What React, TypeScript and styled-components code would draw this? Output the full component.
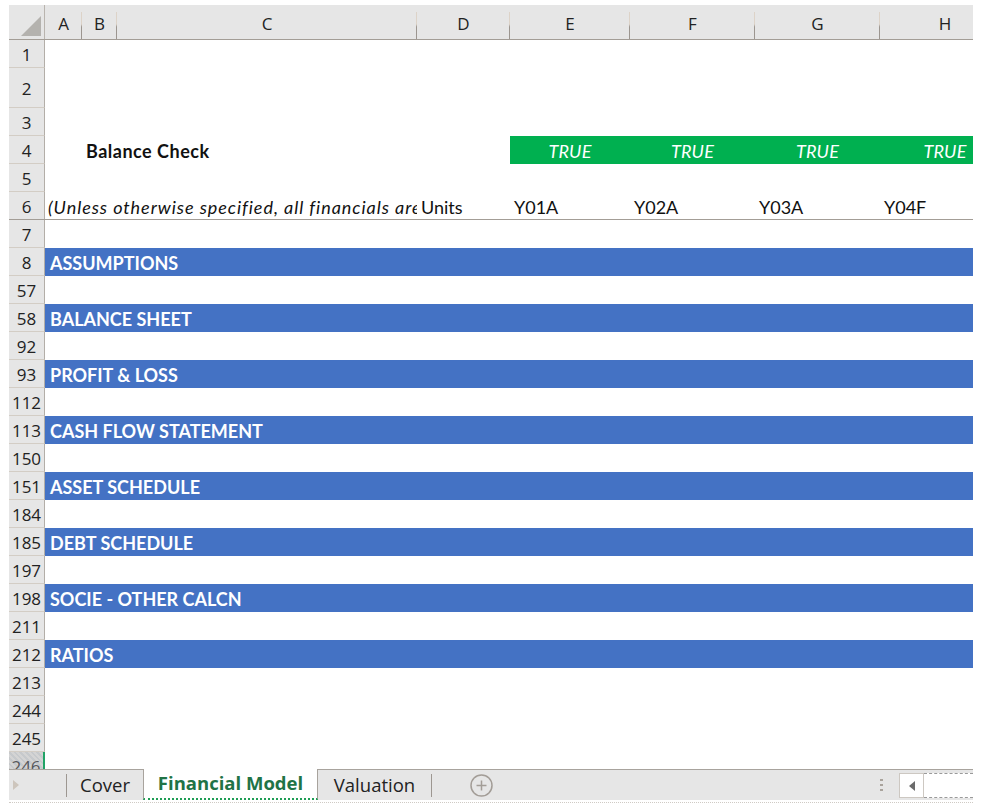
import * as React from "react";
import styled, { createGlobalStyle, css } from "styled-components";

const colors = {
  headerBg: "#e6e6e6",
  headerLine: "#a39d96",
  rowLine: "#d3cdc5",
  text: "#222222",
  band: "#4472c4",
  green: "#00b050",
  excelGreen: "#217346",
};

const COLUMNS = "36px 37px 35px 300px 93px 120px 125px 125px 130px";
const cellFont = `"Lato", "Liberation Sans", sans-serif`;
const uiFont = `"Open Sans", "Noto Sans", sans-serif`;

const GlobalStyle = createGlobalStyle`
  html, body {
    margin: 0;
    padding: 0;
    background: #ffffff;
  }
  * {
    box-sizing: border-box;
  }
`;

const SPage = styled.div`
  width: 983px;
  height: 812px;
  padding: 5px 0 0 9px;
  overflow: hidden;
  background: #ffffff;
`;

const SSheet = styled.div`
  width: 964px;
  display: flex;
  flex-direction: column;
  overflow: hidden;
`;

const SColumnHeader = styled.div`
  display: grid;
  grid-template-columns: ${COLUMNS};
  height: 35px;
  background: ${colors.headerBg};
  border-bottom: 1px solid ${colors.headerLine};
`;

const SCorner = styled.div`
  position: relative;
  border-right: 1px solid #b9b4ae;
  & svg {
    position: absolute;
    right: 3px;
    bottom: 3px;
  }
`;

const SColLetter = styled.div`
  position: relative;
  display: flex;
  align-items: flex-end;
  justify-content: center;
  padding-bottom: 4px;
  font-family: ${uiFont};
  font-size: 17px;
  color: ${colors.text};
  &::after {
    content: "";
    position: absolute;
    right: 0;
    bottom: 0;
    width: 1px;
    height: 27px;
    background: linear-gradient(#ddd3c8 0%, #ddd3c8 45%, #9c9690 55%, #9c9690 100%);
  }
`;

const SBody = styled.div`
  height: 729px;
  overflow: hidden;
  display: flex;
  flex-direction: column;
`;

const SRow = styled.div<{ $height: number; $frozen?: boolean }>`
  display: grid;
  grid-template-columns: ${COLUMNS};
  flex: 0 0 auto;
  height: ${(p) => p.$height}px;
  ${(p) =>
    p.$frozen &&
    css`
      border-bottom: 1px solid ${colors.headerLine};
    `}
`;

const SRowHead = styled.div<{ $active?: boolean; $frozen?: boolean }>`
  display: flex;
  align-items: center;
  justify-content: center;
  background: ${colors.headerBg};
  border-right: 1px solid #b3aea8;
  border-bottom: ${(p) => (p.$frozen ? "none" : `1px solid ${colors.rowLine}`)};
  font-family: ${uiFont};
  font-size: 17px;
  color: ${colors.text};
  padding-top: 2px;
  ${(p) =>
    p.$active &&
    css`
      background: repeating-linear-gradient(45deg, #d4d4d4 0 2px, #c6c9cc 2px 4px);
      border-right: 2px solid #21a366;
      color: #56585c;
    `}
`;

const SCell = styled.div<{
  $span?: number;
  $bold?: boolean;
  $italic?: boolean;
  $center?: boolean;
}>`
  grid-column: span ${(p) => p.$span ?? 1};
  display: flex;
  align-items: center;
  justify-content: ${(p) => (p.$center ? "center" : "flex-start")};
  padding: 2px 4px 0 4px;
  overflow: hidden;
  white-space: nowrap;
  font-family: ${cellFont};
  font-size: 18px;
  font-weight: ${(p) => (p.$bold ? 700 : 400)};
  font-style: ${(p) => (p.$italic ? "italic" : "normal")};
  letter-spacing: ${(p) => (p.$italic ? "0.95px" : p.$bold ? "0.5px" : "0")};
  color: #111111;
`;

const SCheckCell = styled(SCell)`
  background: ${colors.green};
  color: #ffffff;
  font-style: italic;
  letter-spacing: 0.2px;
`;

const SBand = styled.div`
  grid-column: 2 / -1;
  display: flex;
  align-items: center;
  padding: 2px 5px 0;
  background: ${colors.band};
  color: #ffffff;
  font-family: ${cellFont};
  font-size: 18px;
  font-weight: 700;
  white-space: nowrap;
`;

/* ---------- sheet tabs ---------- */

const STabBar = styled.div`
  display: flex;
  align-items: stretch;
  height: 31px;
  background: ${colors.headerBg};
  border-top: 1px solid #a8a39d;
`;

const SNav = styled.div`
  width: 57px;
  display: flex;
  align-items: center;
  padding-left: 4px;
`;

const SDivider = styled.div`
  width: 1px;
  margin: 4px 0 3px;
  background: #9d9791;
`;

const STab = styled.div<{ $width: number; $active?: boolean }>`
  width: ${(p) => p.$width}px;
  display: flex;
  align-items: center;
  justify-content: center;
  padding-bottom: 2px;
  font-family: ${uiFont};
  font-size: 18.5px;
  color: ${colors.text};
  ${(p) =>
    p.$active &&
    css`
      margin-top: -1px;
      background: #ffffff;
      border-left: 1px solid #a8a39d;
      border-right: 1px solid #a8a39d;
      border-bottom: 2px dotted #1f9d55;
      color: ${colors.excelGreen};
      font-weight: 700;
    `}
`;

const SAddSheet = styled.div`
  display: flex;
  align-items: center;
  margin-left: 38px;
`;

const SSpacer = styled.div`
  flex: 1;
`;

const SGrip = styled.div`
  display: flex;
  flex-direction: column;
  justify-content: center;
  gap: 3px;
  margin-right: 16px;
  & span {
    width: 3px;
    height: 2px;
    background: #a9a39c;
  }
`;

const SScrollButton = styled.div`
  width: 25px;
  margin: 3px 0 2px;
  display: flex;
  align-items: center;
  justify-content: center;
  background: #ffffff;
  border: 1px solid #cdc8c2;
`;

const STrack = styled.div`
  width: 49px;
  margin: 3px 0 2px;
  background: #ffffff;
  border-top: 1px dashed #9a9a9a;
  border-bottom: 1px dashed #9a9a9a;
`;

const SFooterLine = styled.div`
  height: 3px;
  border-bottom: 1px dotted #cfcac4;
`;

const columnLetters = ["A", "B", "C", "D", "E", "F", "G", "H"];
const years = ["Y01A", "Y02A", "Y03A", "Y04F"];

const sections: [string, string, string][] = [
  ["8", "ASSUMPTIONS", "57"],
  ["58", "BALANCE SHEET", "92"],
  ["93", "PROFIT & LOSS", "112"],
  ["113", "CASH FLOW STATEMENT", "150"],
  ["151", "ASSET SCHEDULE", "184"],
  ["185", "DEBT SCHEDULE", "197"],
  ["198", "SOCIE - OTHER CALCN", "211"],
];

const EmptyRow = ({ label, height = 28 }: { label: string; height?: number }) => (
  <SRow $height={height}>
    <SRowHead>{label}</SRowHead>
  </SRow>
);

const BandRow = ({ label, title }: { label: string; title: string }) => (
  <SRow $height={28}>
    <SRowHead>{label}</SRowHead>
    <SBand>{title}</SBand>
  </SRow>
);

const App = () => {
  return (
    <SPage>
      <GlobalStyle />
      <SSheet>
        <SColumnHeader>
          <SCorner>
            <svg width="20" height="20" viewBox="0 0 20 20">
              <polygon points="20,0 20,20 0,20" fill="#b4b2ae" />
            </svg>
          </SCorner>
          {columnLetters.map((c) => (
            <SColLetter key={c}>{c}</SColLetter>
          ))}
        </SColumnHeader>

        <SBody>
          <EmptyRow label="1" />
          <EmptyRow label="2" height={40} />
          <EmptyRow label="3" />
          <SRow $height={28}>
            <SRowHead>4</SRowHead>
            <SCell />
            <SCell $span={2} $bold>
              Balance Check
            </SCell>
            <SCell />
            {years.map((y) => (
              <SCheckCell key={y} $center>
                TRUE
              </SCheckCell>
            ))}
          </SRow>
          <EmptyRow label="5" />
          <SRow $height={28} $frozen>
            <SRowHead $frozen>6</SRowHead>
            <SCell $span={3} $italic style={{ paddingLeft: 3 }}>
              (Unless otherwise specified, all financials are in USD millions)
            </SCell>
            <SCell>Units</SCell>
            {years.map((y) => (
              <SCell key={y}>{y}</SCell>
            ))}
          </SRow>
          <EmptyRow label="7" />
          {sections.map(([start, title, gap]) => (
            <React.Fragment key={start}>
              <BandRow label={start} title={title} />
              <EmptyRow label={gap} />
            </React.Fragment>
          ))}
          <BandRow label="212" title="RATIOS" />
          <EmptyRow label="213" />
          <EmptyRow label="244" />
          <EmptyRow label="245" />
          <SRow $height={28}>
            <SRowHead $active>246</SRowHead>
          </SRow>
        </SBody>

        <STabBar>
          <SNav>
            <svg width="6" height="10" viewBox="0 0 6 10">
              <polygon points="0,0 6,5 0,10" fill="#cdc5bc" />
            </svg>
          </SNav>
          <SDivider />
          <STab $width={76}>Cover</STab>
          <STab $width={175} $active>
            Financial Model
          </STab>
          <STab $width={113}>Valuation</STab>
          <SDivider />
          <SAddSheet>
            <svg width="23" height="23" viewBox="0 0 23 23">
              <circle cx="11.5" cy="11.5" r="10.5" fill="none" stroke="#a39d97" strokeWidth="1.5" />
              <path d="M11.5 6.5v10M6.5 11.5h10" stroke="#a39d97" strokeWidth="1.5" />
            </svg>
          </SAddSheet>
          <SSpacer />
          <SGrip>
            <span />
            <span />
            <span />
          </SGrip>
          <SScrollButton>
            <svg width="6" height="10" viewBox="0 0 6 10">
              <polygon points="6,0 0,5 6,10" fill="#6b6b6b" />
            </svg>
          </SScrollButton>
          <STrack />
        </STabBar>
        <SFooterLine />
      </SSheet>
    </SPage>
  );
};

export default App;
